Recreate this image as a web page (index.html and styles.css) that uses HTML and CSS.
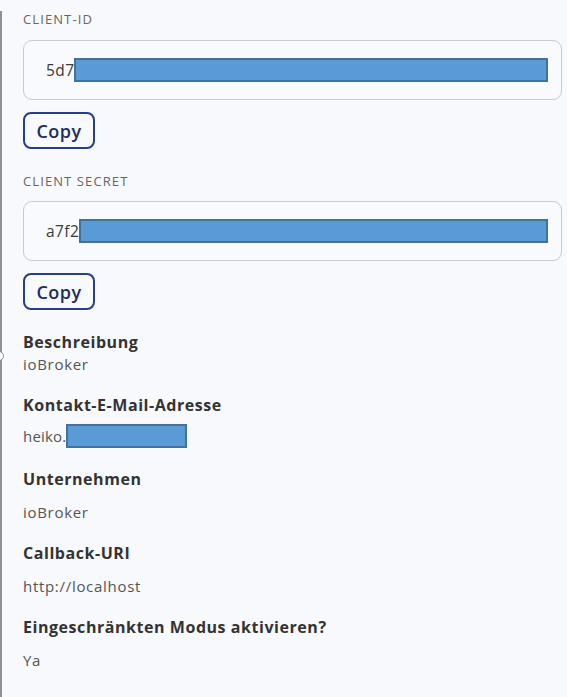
FILE: index.html
```html
<!DOCTYPE html>
<html>

<head>
  <meta charset="utf-8">
  <meta name="viewport" content="width=device-width, initial-scale=1">
  <title>App-Details</title>
  <link rel="stylesheet" href="styles.css">
</head>

<body>
  <div class="panel">
    <div class="field-label first">CLIENT-ID</div>
    <div class="field-box">
      <span class="field-value">5d7</span><span class="redact redact-long"></span>
    </div>
    <button class="btn-copy">Copy</button>

    <div class="field-label">CLIENT SECRET</div>
    <div class="field-box">
      <span class="field-value">a7f2</span><span class="redact redact-long"></span>
    </div>
    <button class="btn-copy">Copy</button>

    <div class="info first-info">
      <div class="info-label">Beschreibung</div>
      <div class="info-value tight">ioBroker</div>
    </div>
    <div class="info">
      <div class="info-label">Kontakt-E-Mail-Adresse</div>
      <div class="info-value mail">heiko.<span class="redact redact-short"></span></div>
    </div>
    <div class="info">
      <div class="info-label">Unternehmen</div>
      <div class="info-value">ioBroker</div>
    </div>
    <div class="info">
      <div class="info-label">Callback-URI</div>
      <div class="info-value">http://localhost</div>
    </div>
    <div class="info">
      <div class="info-label">Eingeschränkten Modus aktivieren?</div>
      <div class="info-value">Ya</div>
    </div>

    <span class="handle handle-left"></span>
    <span class="handle handle-bottom"></span>
  </div>
</body>

</html>
```
FILE: styles.css
```css
html, body {
  margin: 0;
  padding: 0;
  background: #f8f9fc;
}

body {
  font-family: "Open Sans", "Liberation Sans", sans-serif;
  color: #333;
  height: 697px;
  overflow: hidden;
}

.panel {
  position: relative;
  height: 697px;
  box-sizing: border-box;
  border-left: 2px solid #8f8f8f;
  padding: 0 5px 0 21px;
}

.field-label {
  font-size: 13px;
  line-height: 16px;
  letter-spacing: 1.1px;
  color: #666;
  margin-top: 24px;
  margin-bottom: 12px;
}

.field-label.first {
  margin-top: 11px;
  margin-bottom: 13px;
}

.field-box {
  display: flex;
  align-items: center;
  height: 60px;
  box-sizing: border-box;
  border: 1px solid #cacaca;
  border-radius: 9px;
  padding-left: 22px;
  background: #f9fafd;
}

.field-value {
  font-size: 15.5px;
  letter-spacing: 0.4px;
  color: #3a3a3a;
}

.redact {
  display: inline-block;
  box-sizing: border-box;
  height: 24px;
  background: #5b9bd5;
  border: 2px solid #41719c;
}

.redact-long {
  flex: 1;
  margin-right: 13px;
}

.redact-short {
  width: 121px;
  vertical-align: -6px;
}

.btn-copy {
  display: block;
  margin-top: 12px;
  width: 72px;
  height: 37px;
  background: #f8f9fc;
  border: 2px solid #283e85;
  border-radius: 8px;
  font-family: inherit;
  font-size: 18px;
  font-weight: 600;
  letter-spacing: 0.5px;
  color: #1f2d5e;
  padding: 0;
  cursor: pointer;
}

.info {
  margin-top: 21px;
}

.info.first-info {
  margin-top: 22px;
}

.info-label {
  font-size: 16px;
  line-height: 20px;
  font-weight: 700;
  letter-spacing: 0.55px;
  color: #333;
}

.info-value {
  margin-top: 13px;
  font-size: 15px;
  line-height: 20px;
  letter-spacing: 0.7px;
  color: #555;
}

.info-value.tight {
  margin-top: 2px;
}

.info-value.mail {
  margin-top: 9px;
  line-height: 24px;
  letter-spacing: 0.2px;
}

.handle {
  position: absolute;
  width: 10px;
  height: 10px;
  box-sizing: border-box;
  border: 1.5px solid #8f8f8f;
  border-radius: 50%;
  background: #f8f9fc;
}

.handle-left {
  left: -8px;
  top: 340px;
}

.handle-bottom {
  left: 283px;
  top: 692px;
}
```
